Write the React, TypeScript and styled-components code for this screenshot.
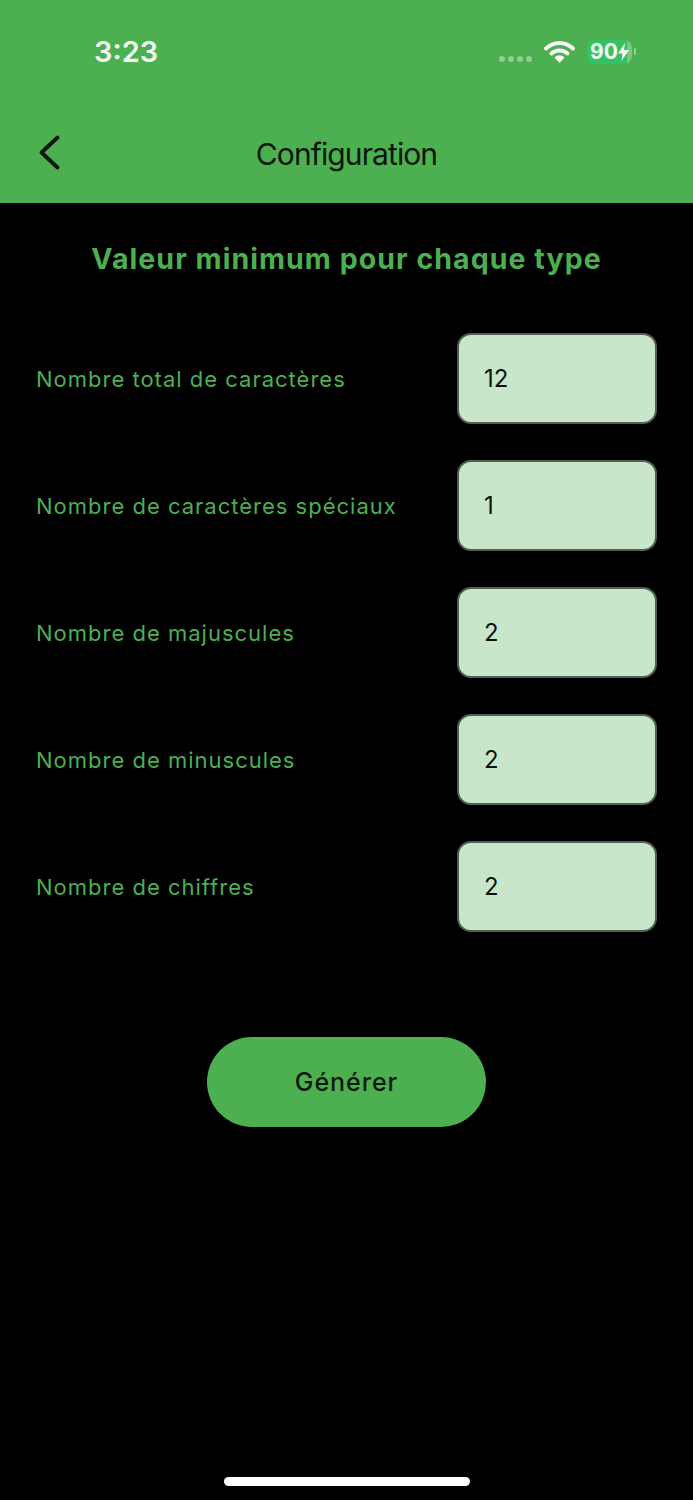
import React from 'react';
import styled, { createGlobalStyle } from 'styled-components';

const GREEN = '#4caf50';

const Global = createGlobalStyle`
  html, body { margin: 0; padding: 0; background: #000; }
  * { box-sizing: border-box; }
`;

const Screen = styled.div`
  width: 693px;
  height: 1500px;
  background: #000;
  display: flex;
  flex-direction: column;
  font-family: Inter, "Liberation Sans", sans-serif;
  overflow: hidden;
`;

const Header = styled.header`
  height: 203px;
  background: ${GREEN};
  display: flex;
  flex-direction: column;
`;

const StatusBar = styled.div`
  height: 103px;
  display: flex;
  align-items: center;
  padding: 0 61px 0 94px;
`;

const Time = styled.div`
  color: #f4fbf4;
  font-size: 29px;
  font-weight: 600;
  flex: 1;
`;

const Dots = styled.div`
  display: flex;
  gap: 3px;
  margin: 14px 12px 0 0;
`;

const Dot = styled.span`
  width: 6px;
  height: 6px;
  border-radius: 50%;
  background: #93ce95;
`;

const Battery = styled.div`
  position: relative;
  width: 45px;
  height: 24px;
  margin-left: 12px;
  border-radius: 8px;
  background: linear-gradient(to right, #35c265 0 88%, #7ec77f 88% 100%);
  color: #f4fbf4;
  font-size: 21px;
  font-weight: 700;
  display: flex;
  align-items: center;
  padding-left: 3px;

  &::after {
    content: '';
    position: absolute;
    right: -4px;
    top: 8px;
    width: 2px;
    height: 7px;
    border-radius: 1px;
    background: #93ce95;
  }
`;

const Nav = styled.div`
  flex: 1;
  display: flex;
  align-items: center;
  justify-content: center;
  position: relative;
`;

const Back = styled.svg`
  position: absolute;
  left: 36px;
  top: 31px;
`;

const NavTitle = styled.div`
  margin-top: 2px;
  font-size: 30px;
  color: #0a160a;
  font-weight: 400;
  letter-spacing: -0.9px;
`;

const Main = styled.main`
  flex: 1;
  display: flex;
  flex-direction: column;
  padding: 0 36px;
  position: relative;
`;

const Heading = styled.h1`
  margin: 36px 0 54px;
  height: 40px;
  line-height: 40px;
  text-align: center;
  color: ${GREEN};
  font-size: 28.5px;
  font-weight: 700;
  letter-spacing: 1.05px;
`;

const Fields = styled.div`
  display: flex;
  flex-direction: column;
  gap: 36px;
`;

const Row = styled.div`
  display: flex;
  align-items: center;
  justify-content: space-between;
`;

const Label = styled.div`
  color: ${GREEN};
  font-size: 22px;
  letter-spacing: 1px;
`;

const Value = styled.div`
  width: 200px;
  height: 91px;
  background: #c8e6c9;
  border: 2px solid #525f52;
  border-radius: 14px;
  display: flex;
  align-items: center;
  padding-left: 25px;
  font-size: 24px;
  color: #0c140c;
`;

const Generate = styled.button`
  align-self: center;
  width: 279px;
  height: 90px;
  margin-top: 105px;
  border: 0;
  border-radius: 45px;
  background: ${GREEN};
  color: #0a160a;
  font-family: inherit;
  font-size: 25px;
  font-weight: 500;
  letter-spacing: 0.95px;
`;

const HomeBar = styled.div`
  position: absolute;
  left: 224px;
  bottom: 14px;
  width: 246px;
  height: 9px;
  border-radius: 5px;
  background: #fff;
`;

const fields = [
  { label: 'Nombre total de caractères', value: '12' },
  { label: 'Nombre de caractères spéciaux', value: '1' },
  { label: 'Nombre de majuscules', value: '2' },
  { label: 'Nombre de minuscules', value: '2' },
  { label: 'Nombre de chiffres', value: '2' },
];

export default function App() {
  return (
    <Screen>
      <Global />
      <Header>
        <StatusBar>
          <Time>3:23</Time>
          <Dots>
            <Dot />
            <Dot />
            <Dot />
            <Dot />
          </Dots>
          <svg width="31" height="24" viewBox="0 0 31 24">
            <path d="M2 8.5C10 1 21 1 29 8.5" fill="none" stroke="#f4fbf4" strokeWidth="4" strokeLinecap="round" />
            <path d="M7.5 13.5C12 9.5 19 9.5 23.5 13.5" fill="none" stroke="#f4fbf4" strokeWidth="4" strokeLinecap="round" />
            <path d="M10.5 17.5C13.5 14.5 17.5 14.5 20.5 17.5L15.5 23Z" fill="#f4fbf4" />
          </svg>
          <Battery>
            90
            <svg width="11" height="18" viewBox="0 0 11 18">
              <path d="M7 0L0 10.5H4.5L3.5 18L11 7H6Z" fill="#f4fbf4" />
            </svg>
          </Battery>
        </StatusBar>
        <Nav>
          <Back width="24" height="36" viewBox="0 0 24 36">
            <path d="M21.5 3.5L5.5 18.5L21.5 33.5" fill="none" stroke="#0a160a" strokeWidth="3.8" strokeLinecap="round" strokeLinejoin="round" />
          </Back>
          <NavTitle>Configuration</NavTitle>
        </Nav>
      </Header>
      <Main>
        <Heading>Valeur minimum pour chaque type</Heading>
        <Fields>
          {fields.map((f) => (
            <Row key={f.label}>
              <Label>{f.label}</Label>
              <Value>{f.value}</Value>
            </Row>
          ))}
        </Fields>
        <Generate>Générer</Generate>
        <HomeBar />
      </Main>
    </Screen>
  );
}
